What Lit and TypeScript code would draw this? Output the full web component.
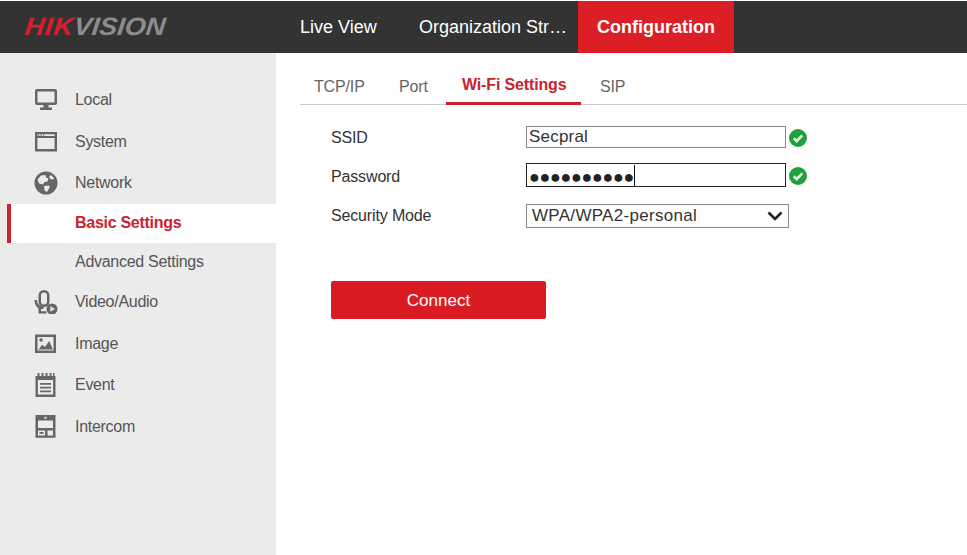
import { LitElement, html, css, svg } from "lit";
import { customElement } from "lit/decorators.js";

const icons: Record<string, unknown> = {
  local: svg`<path fill-rule="evenodd" d="M3 1h18a2 2 0 0 1 2 2v12a2 2 0 0 1-2 2h-6.500v2.500H18V22H6v-2.500h3.500V17H3a2 2 0 0 1-2-2V3a2 2 0 0 1 2-2zM3.500 3.500v11h17v-11z"/>`,
  system: svg`<path fill-rule="evenodd" d="M1 2h22v19.500H1zM3.400 8v11h17.200V8zM3.400 4.300v1.700h17.200V4.300z"/><path d="M4 4.500h1.200v1.200H4zM6.500 4.500h1.200v1.200H6.500zM9 4.500h1.200v1.200H9z"/>`,
  network: svg`<path fill-rule="evenodd" d="M12 0.500a11.500 11.500 0 1 1 0 23a11.500 11.500 0 0 1 0-23zM7 4.500L3.500 8.500l1.500 4 4 1 1.500-2.500 3-.5 1-3-2.500-1-.5-2.500zM17 4l-2 2 2 2.500 3.300-.5A9 9 0 0 0 17 4zM10 15l.8 5 2.200 1 3-5.500-1.500-1z"/>`,
  video: svg`<path fill-rule="evenodd" d="M10 0a5.500 5.500 0 0 1 5.500 5.500v6a5.500 5.500 0 0 1-11 0v-6A5.500 5.500 0 0 1 10 0zM10 2.600a3 3 0 0 0-3 3v5.800a3 3 0 0 0 6 0V5.600a3 3 0 0 0-3-3z"/><path d="M0.500 10h2.600c0 4 2.600 6.300 6.400 6.700V19H7v2.200h5.500v2.400H4.500v-5.200C2.200 17 .5 14.200 .5 10z"/><path fill-rule="evenodd" d="M18 13.500a5.500 5.500 0 1 1 0 11a5.500 5.500 0 0 1 0-11zM16.300 16.200v5.600l4.700-2.800z"/>`,
  image: svg`<path fill-rule="evenodd" d="M1 2.500h21v18.500H1zM3.500 5v13.500h16V5z"/><path d="M4.500 17.500l3.800-4.800 2.700 2.400 4.200-6 3.800 8.400z"/><circle cx="7" cy="8" r="1.800"/>`,
  event: svg`<path fill-rule="evenodd" d="M1.500 3h20v21h-20zM3.900 7v14.600h15.200V7z"/><path d="M3.500 0h2v5h-2zM7.500 0h2v5h-2zM11.500 0h2v5h-2zM15.500 0h2v5h-2zM19 0h1.500v5H19zM6 10h11v1.800H6zM6 13.800h11v1.800H6zM6 17.500h11v1.800H6z"/>`,
  intercom: svg`<path fill-rule="evenodd" d="M1.500 0h20v22.800h-20zM4 5.500v7.500h15V5.500zM4 15.500v5h7v-5zM13.500 15.500v5h5.500v-5z"/><path d="M10.500 1.800h2v2h-2z" fill="#ebebeb"/><path d="M5.500 17h4v1.800h-4z"/>`,
};

const check = html`<svg class="check" viewBox="0 0 20 20" aria-hidden="true"><circle cx="10" cy="10" r="10" fill="#1ea13d"/><path d="M5.300 10.300l3.200 3.200 6.200-6.400" fill="none" stroke="#e4f3e4" stroke-width="3"/></svg>`;

const menu = [
  { label: "Local", icon: "local", cls: "h42" },
  { label: "System", icon: "system", cls: "h42" },
  { label: "Network", icon: "network", cls: "h41 up" },
  { label: "Basic Settings", icon: "", cls: "h39 sub active" },
  { label: "Advanced Settings", icon: "", cls: "h38 sub" },
  { label: "Video/Audio", icon: "video", cls: "h41" },
  { label: "Image", icon: "image", cls: "h43" },
  { label: "Event", icon: "event", cls: "h40" },
  { label: "Intercom", icon: "intercom", cls: "h44" },
];

@customElement("app-root")
export class AppRoot extends LitElement {
  static styles = css`
    :host {
      display: flex;
      flex-direction: column;
      width: 967px;
      height: 555px;
      overflow: hidden;
      background: #fff;
      font-family: "Liberation Sans", Arial, sans-serif;
      font-size: 16px;
      letter-spacing: -0.150px;
      color: #333;
    }
    .top {
      display: flex;
      height: 52px;
      margin-top: 1px;
      background: #333;
      flex: none;
      letter-spacing: 0;
    }
    .logo {
      width: 300px;
      padding-left: 25px;
      box-sizing: border-box;
      flex: none;
    }
    .logo span {
      display: block;
      line-height: 50px;
      font-size: 25px;
      font-weight: bold;
      font-style: italic;
      color: #8c8c8c;
      transform: scaleX(1.08) skewX(-6deg);
      transform-origin: 0 50%;
      white-space: nowrap;
    }
    .logo b {
      color: #d81e2c;
      letter-spacing: 0.800px;
    }
    .nav {
      display: flex;
      align-items: center;
      color: #fff;
      font-size: 18px;
    }
    .nav span {
      display: block;
      line-height: 52px;
    }
    .nav .n1 {
      width: 119px;
    }
    .nav .n2 {
      width: 159px;
    }
    .nav .sel {
      width: 156px;
      text-align: center;
      background: #dc1f26;
      font-weight: bold;
    }
    .body {
      display: flex;
      flex: 1;
    }
    .side {
      width: 276px;
      flex: none;
      box-sizing: border-box;
      padding-top: 26px;
      background: #ebebeb;
      color: #555;
      letter-spacing: -0.280px;
    }
    .row {
      display: flex;
      align-items: center;
      box-sizing: border-box;
      padding-left: 34px;
    }
    .row.up {
      padding-bottom: 1px;
    }
    .row svg {
      width: 24px;
      height: 24px;
      fill: #666;
      flex: none;
    }
    .row .ic {
      width: 41px;
      flex: none;
      display: flex;
    }
    .h44 { height: 44px; }
    .h43 { height: 43px; }
    .h42 { height: 42px; }
    .h41 { height: 41px; }
    .h40 { height: 40px; }
    .h39 { height: 39px; }
    .h38 { height: 38px; }
    .row.sub {
      padding-left: 75px;
    }
    .row.sub.active {
      margin-left: 7px;
      padding-left: 64px;
      padding-bottom: 1px;
      border-left: 4px solid #c8232f;
      background: #fff;
      color: #c8232f;
      font-weight: bold;
    }
    .main {
      flex: 1;
      padding: 0 0 0 24px;
    }
    .tabs {
      display: flex;
      height: 52px;
      box-sizing: border-box;
      border-bottom: 1px solid #c9ccd2;
      color: #666;
      padding-left: 14px;
    }
    .tab {
      padding-top: 25px;
      line-height: 18px;
    }
    .t1 { width: 85px; }
    .t2 { width: 47px; }
    .t3 {
      width: 135px;
      box-sizing: border-box;
      margin-right: 19px;
      padding: 23px 0 0 16px;
      height: 52px;
      border-bottom: 3px solid #c8232f;
      color: #c8232f;
      font-weight: bold;
    }
    .form {
      padding: 21px 0 0 31px;
      display: grid;
      grid-template-columns: 195px auto;
      justify-content: start;
      row-gap: 15px;
      align-items: center;
      color: #333;
    }
    .lab {
      padding-top: 2px;
    }
    .lab.pwl {
      padding-top: 4px;
    }
    .field {
      display: flex;
      align-items: center;
      gap: 3px;
    }
    .box {
      width: 260px;
      box-sizing: border-box;
      border: 1px solid #888;
      color: #333;
      padding-left: 2px;
      font-size: 17px;
      height: 22px;
      line-height: 20px;
      letter-spacing: 0.200px;
    }
    .pw {
      height: 24px;
      border: 1px solid #222;
      line-height: 22px;
      display: flex;
      align-items: center;
      font-size: 18px;
      letter-spacing: -0.370px;
      color: #222;
    }
    .dots {
      margin-top: 3px;
    }
    .caret {
      width: 1px;
      height: 21px;
      background: #111;
    }
    .check {
      width: 18px;
      height: 18px;
      margin-top: 2px;
      flex: none;
    }
    .selectbox {
      width: 263px;
      height: 24px;
      margin-top: 2px;
      box-sizing: border-box;
      border: 1px solid #888;
      padding: 0 4px 0 5px;
      display: flex;
      align-items: center;
      justify-content: space-between;
      font-size: 17px;
      letter-spacing: 0.300px;
      color: #333;
    }
    .selectbox svg {
      width: 16px;
      height: 10px;
      margin-right: 1px;
    }
    .btn {
      margin: 53px 0 0 31px;
      width: 215px;
      height: 38px;
      border-radius: 2px;
      background: #d91c24;
      color: #fff;
      font-size: 17px;
      letter-spacing: 0;
      line-height: 39px;
      text-align: center;
    }
  `;

  render() {
    return html`
      <div class="top">
        <div class="logo"><span><b>HIK</b>VISION</span></div>
        <div class="nav">
          <span class="n1">Live View</span>
          <span class="n2">Organization Str…</span>
          <span class="sel">Configuration</span>
        </div>
      </div>
      <div class="body">
        <div class="side">
          ${menu.map(
            (m) => html`<div class="row ${m.cls}">
              ${m.icon
                ? html`<span class="ic"><svg viewBox="0 0 24 24" aria-hidden="true">${icons[m.icon]}</svg></span>`
                : ""}
              ${m.label}
            </div>`
          )}
        </div>
        <div class="main">
          <div class="tabs">
            <div class="tab t1">TCP/IP</div>
            <div class="tab t2">Port</div>
            <div class="t3">Wi-Fi Settings</div>
            <div class="tab">SIP</div>
          </div>
          <div class="form">
            <div class="lab">SSID</div>
            <div class="field"><div class="box">Secpral</div>${check}</div>
            <div class="lab pwl">Password</div>
            <div class="field"><div class="box pw"><span class="dots">●●●●●●●●●●</span><span class="caret"></span></div>${check}</div>
            <div class="lab">Security Mode</div>
            <div class="selectbox">WPA/WPA2-personal
              <svg viewBox="0 0 16 10" aria-hidden="true"><path d="M1.500 1.500L8 8l6.500-6.500" fill="none" stroke="#222" stroke-width="2.600"/></svg>
            </div>
          </div>
          <div class="btn">Connect</div>
        </div>
      </div>
    `;
  }
}
